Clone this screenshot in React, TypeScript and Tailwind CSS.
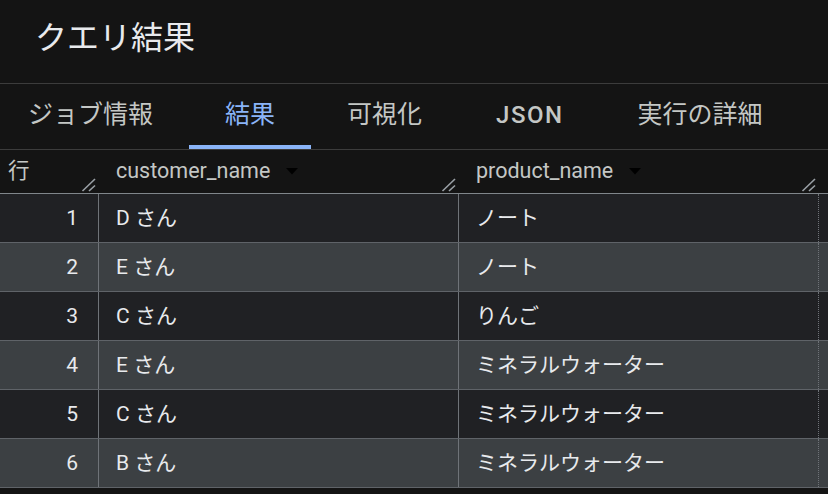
const rows = [
  { n: 1, customer: "D さん", product: "ノート" },
  { n: 2, customer: "E さん", product: "ノート" },
  { n: 3, customer: "C さん", product: "りんご" },
  { n: 4, customer: "E さん", product: "ミネラルウォーター" },
  { n: 5, customer: "C さん", product: "ミネラルウォーター" },
  { n: 6, customer: "B さん", product: "ミネラルウォーター" },
];

const tabs = ["ジョブ情報", "結果", "可視化", "JSON", "実行の詳細"];

function ResizeHandle() {
  return (
    <svg className="self-end mb-[1px] mr-[3px] shrink-0" width="15" height="14" viewBox="0 0 15 14">
      <line x1="1.5" y1="13" x2="14" y2="1" stroke="#9aa0a6" strokeWidth="1.6" />
      <line x1="8" y1="13" x2="14" y2="7.5" stroke="#9aa0a6" strokeWidth="1.6" />
    </svg>
  );
}

function SortArrow() {
  return (
    <svg className="ml-[16px] shrink-0" width="12" height="7" viewBox="0 0 12 7">
      <polygon points="0,0 12,0 6,6.5" fill="#000000" />
    </svg>
  );
}

export default function App() {
  return (
    <div
      className="w-[828px] h-[494px] bg-[#141414] overflow-hidden"
      style={{ fontFamily: 'Roboto, "Noto Sans CJK JP", sans-serif' }}
    >
      <div className="h-[84px] border-b border-[#3c3c3c] flex items-center pl-[35px] pb-[7px]">
        <h1 className="text-[32px] text-[#e8eaed] leading-none">クエリ結果</h1>
      </div>

      <div className="h-[66px] border-b border-[#3c3c3c] flex ml-[-8px]">
        {tabs.map(t => {
          const active = t === "結果";
          const json = t === "JSON";
          return (
            <div
              key={t}
              className={`flex flex-col ${json ? "px-[38px]" : "px-[36px]"} ${
                active ? "text-[#8ab4f8]" : "text-[#c4c7c5]"
              }`}
            >
              <div
                className={`flex-1 flex items-center ${
                  json ? "font-medium tracking-[1.5px] text-[24px]" : "text-[25px]"
                }`}
              >
                {t}
              </div>
              <div className={`h-[4px] -mx-[36px] ${active ? "bg-[#8ab4f8]" : ""}`} />
            </div>
          );
        })}
      </div>

      <div className="h-[44px] border-b border-[#80868b] flex text-[#c4c7c5] text-[21.5px]">
        <div className="w-[99px] flex items-center pl-[8px]">
          <span className="flex-1">行</span>
          <ResizeHandle />
        </div>
        <div className="w-[360px] flex items-center pl-[17px]">
          <span>customer_name</span>
          <SortArrow />
          <span className="flex-1" />
          <ResizeHandle />
        </div>
        <div className="w-[360px] flex items-center pl-[17px]">
          <span>product_name</span>
          <SortArrow />
          <span className="flex-1" />
          <ResizeHandle />
        </div>
        <div className="flex-1" />
      </div>

      {rows.map((r, i) => (
        <div
          key={r.n}
          className={`h-[49px] border-b border-[#5f6368] flex text-[21px] text-[#e8eaed] ${
            i % 2 === 0 ? "bg-[#202124]" : "bg-[#3c4043]"
          }`}
        >
          <div className="w-[99px] border-r border-[#6f7378] flex items-center justify-end pr-[20px] pt-[2px]">
            {r.n}
          </div>
          <div className="w-[360px] border-r border-[#6f7378] flex items-center pl-[17px] pt-[2px]">
            {r.customer}
          </div>
          <div className="w-[360px] border-r border-dotted border-[#6f7378] flex items-center pl-[17px] pt-[2px]">
            {r.product}
          </div>
          <div className="flex-1" />
        </div>
      ))}
    </div>
  );
}
